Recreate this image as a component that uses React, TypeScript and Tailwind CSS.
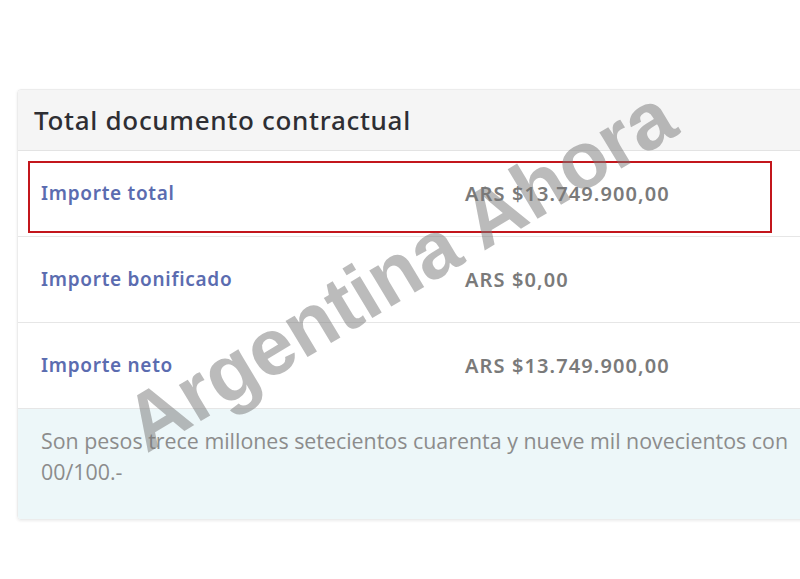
export default function App() {
  const rows = [
    { label: "Importe total", value: "ARS $13.749.900,00" },
    { label: "Importe bonificado", value: "ARS $0,00" },
    { label: "Importe neto", value: "ARS $13.749.900,00" },
  ];

  return (
    <div className="relative w-[800px] h-[579px] overflow-hidden bg-white">
      <div className="pt-[89px] pl-[17px]">
        <div className="w-[800px] rounded-[4px] border border-[#ececec] shadow-[0_1px_3px_rgba(0,0,0,0.08)] overflow-hidden">
          {/* Header */}
          <div className="h-[61px] bg-[#f5f5f5] border-b border-[#e3e3e3] flex items-center pl-[16px]">
            <h2 className="font-['Noto_Sans',sans-serif] text-[26px] font-medium text-[#2e2e33] tracking-[0.7px]">
              Total documento contractual
            </h2>
          </div>

          {rows.map((row) => (
            <div
              key={row.label}
              className="h-[86px] flex items-center border-b border-[#e6e6e6] bg-white"
            >
              <div className="w-[447px] pl-[23px] font-['Noto_Sans',sans-serif] text-[19px] font-semibold text-[#5b6cb0] tracking-[0.7px]">
                {row.label}
              </div>
              <div className="font-['Noto_Sans',sans-serif] text-[20px] font-semibold text-[#7a7a7a] tracking-[1.1px]">
                {row.value}
              </div>
            </div>
          ))}

          {/* Footer */}
          <div className="h-[110px] bg-[#edf7f9] pl-[23px] pt-[16px]">
            <p className="max-w-[770px] font-['Open_Sans',sans-serif] text-[21.4px] leading-[31px] text-[#8c8c8c]">
              Son pesos trece millones setecientos cuarenta y nueve mil novecientos con 00/100.-
            </p>
          </div>
        </div>
      </div>

      {/* Highlight box */}
      <div className="absolute left-[28px] top-[161px] w-[744px] h-[72px] border-2 border-[#c3161c]" />

      {/* Watermark */}
      <div className="absolute left-[400px] top-[270px] -translate-x-1/2 -translate-y-1/2 -rotate-[31deg] whitespace-nowrap font-['Liberation_Sans',sans-serif] font-bold text-[80px] text-[rgba(120,120,120,0.5)] pointer-events-none">
        Argentina Ahora
      </div>
    </div>
  );
}
